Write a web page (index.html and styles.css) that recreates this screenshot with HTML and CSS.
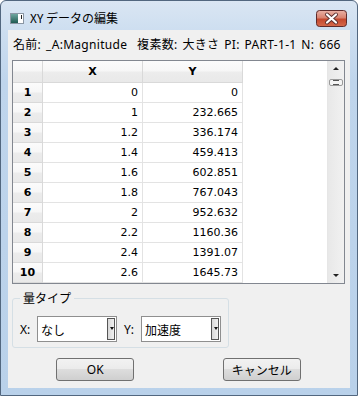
FILE: index.html
```html
<!DOCTYPE html>
<html lang="ja">
<head>
    <meta charset="UTF-8">
    <title>XY データの編集</title>
    <link rel="stylesheet" href="styles.css">
</head>
<body>
<div class="window">
    <div class="titlebar">
        <svg class="app-icon" width="14" height="11" viewBox="0 0 14 11">
            <defs>
                <linearGradient id="pic" x1="0" y1="0" x2="0" y2="1">
                    <stop offset="0" stop-color="#6fa7a0"/>
                    <stop offset="1" stop-color="#1f5a52"/>
                </linearGradient>
            </defs>
            <rect x="0.5" y="0.5" width="13" height="10" fill="#fff" stroke="#8a96a3"/>
            <rect x="1" y="1" width="7" height="9" fill="url(#pic)"/>
            <rect x="11" y="2" width="1" height="4" fill="#222"/>
        </svg>
        <span class="title">XY データの編集</span>
        <button class="close" aria-label="閉じる">
            <svg width="31" height="17" viewBox="0 0 31 17">
                <defs>
                    <linearGradient id="red" x1="0" y1="0" x2="0" y2="1">
                        <stop offset="0" stop-color="#e9b2a6"/>
                        <stop offset="0.45" stop-color="#d98370"/>
                        <stop offset="0.55" stop-color="#c4492f"/>
                        <stop offset="1" stop-color="#d66a4c"/>
                    </linearGradient>
                </defs>
                <rect x="0.5" y="0.5" width="30" height="16" rx="3" fill="url(#red)" stroke="#5e2b2b"/>
                <path d="M11 4.5 L20 12.5 M20 4.5 L11 12.5" stroke="#5a3030" stroke-width="4" stroke-linecap="round"/>
                <path d="M11 4.5 L20 12.5 M20 4.5 L11 12.5" stroke="#fff" stroke-width="2.2" stroke-linecap="round"/>
            </svg>
        </button>
    </div>

    <div class="client">
        <div class="info">名前: _A:Magnitude&nbsp; 複素数: 大きさ PI: PART-1-1 N: 666</div>

        <div class="table-box">
            <div class="grid">
                <table>
                    <thead>
                        <tr>
                            <th class="corner"></th>
                            <th class="colh">X</th>
                            <th class="colh">Y</th>
                            <th class="blank"></th>
                        </tr>
                    </thead>
                    <tbody id="rows"></tbody>
                </table>
            </div>
            <div class="scrollbar">
                <span class="arrow up"></span>
                <span class="thumb"><i></i></span>
                <span class="track"></span>
                <span class="arrow down"></span>
            </div>
        </div>

        <fieldset class="group">
            <legend>量タイプ</legend>
            <div class="combo-row">
                <label class="axis">X:</label>
                <div class="combo"><span class="value">なし</span><span class="drop"></span></div>
                <label class="axis y">Y:</label>
                <div class="combo"><span class="value">加速度</span><span class="drop"></span></div>
            </div>
        </fieldset>

        <div class="buttons">
            <button class="btn">OK</button>
            <button class="btn">キャンセル</button>
        </div>
    </div>
</div>

<script>
    var data = [
        ['0', '0'],
        ['1', '232.665'],
        ['1.2', '336.174'],
        ['1.4', '459.413'],
        ['1.6', '602.851'],
        ['1.8', '767.043'],
        ['2', '952.632'],
        ['2.2', '1160.36'],
        ['2.4', '1391.07'],
        ['2.6', '1645.73']
    ];
    var tbody = document.getElementById('rows');
    data.forEach(function (row, i) {
        var tr = document.createElement('tr');
        tr.innerHTML = '<th class="rowh">' + (i + 1) + '</th>' +
            '<td class="num">' + row[0] + '</td>' +
            '<td class="num">' + row[1] + '</td>' +
            '<td class="blank"></td>';
        tbody.appendChild(tr);
    });
</script>
</body>
</html>
```

FILE: styles.css
```css
body {
    margin: 0;
    font-family: "Noto Sans", "Noto Sans CJK JP", sans-serif;
    font-size: 12px;
    color: #000;
}

.window {
    width: 358px;
    height: 396px;
    box-sizing: border-box;
    border: 1px solid #52677f;
    border-radius: 6px 6px 0 0;
    background: linear-gradient(#dae6f3 0, #cddef0 30px, #bfd5ec 80px, #b9d1ea);
    padding: 0 7px 7px;
    display: flex;
    flex-direction: column;
}

/* title bar */
.titlebar {
    height: 29px;
    display: flex;
    align-items: flex-start;
    flex-shrink: 0;
}

.app-icon {
    margin: 12px 6px 0 2px;
}

.title {
    margin-top: 9px;
    line-height: 16px;
    font-family: "Noto Sans CJK JP", sans-serif;
}

.close {
    margin: 9px 3px 0 auto;
    padding: 0;
    border: none;
    background: none;
    width: 31px;
    height: 17px;
}

.close svg {
    display: block;
}

/* client area */
.client {
    flex: 1;
    background: #f0f0f0;
    padding: 0 5px 0 4px;
    display: flex;
    flex-direction: column;
}

.info {
    margin-top: 7px;
    padding-left: 1px;
    line-height: 16px;
    word-spacing: 1.5px;
    letter-spacing: 0.3px;
    white-space: nowrap;
}

.table-box {
    margin-top: 7px;
    height: 224px;
    box-sizing: border-box;
    border: 1px solid #828790;
    background: #fff;
    display: flex;
}

.grid {
    flex: 1;
    overflow: hidden;
}

table {
    border-collapse: separate;
    border-spacing: 0;
    table-layout: fixed;
    width: 314px;
    font-family: "DejaVu Sans", sans-serif;
    font-size: 11px;
}

th, td {
    padding: 0;
    box-sizing: border-box;
}

thead th {
    height: 22px;
}

tbody tr {
    height: 20px;
}

.corner,
.colh,
.rowh {
    background: linear-gradient(#fbfbfb 0, #f7f7f7 45%, #ececec 55%, #e9e9e9);
    border-right: 1px solid #d9d9d9;
    border-bottom: 1px solid #d9d9d9;
    font-weight: bold;
    text-align: center;
}

.corner,
.rowh {
    width: 30px;
}

.colh {
    width: 100px;
}

.num {
    text-align: right;
    padding-right: 4px;
    border-right: 1px solid #e3e3e3;
    border-bottom: 1px solid #e3e3e3;
}

.blank {
    background: #fff;
}

/* scrollbar */
.scrollbar {
    width: 17px;
    box-sizing: border-box;
    border-left: 1px solid #e6e6e6;
    background: linear-gradient(to right, #e8e8e8, #f1f1f1);
    display: flex;
    flex-direction: column;
    align-items: center;
}

.arrow {
    width: 0;
    height: 0;
    border-left: 3px solid transparent;
    border-right: 3px solid transparent;
}

.arrow.up {
    margin-top: 6px;
    border-bottom: 3px solid #222;
}

.arrow.down {
    margin-bottom: 6px;
    border-top: 3px solid #222;
}

.thumb {
    margin-top: 9px;
    width: 14px;
    height: 7px;
    box-sizing: border-box;
    border: 1px solid #9a9a9a;
    border-radius: 2px;
    background: #f4f4f4;
    display: flex;
    align-items: center;
    justify-content: center;
}

.thumb i {
    width: 6px;
    height: 3px;
    border-top: 1px solid #555;
    border-bottom: 1px solid #555;
}

.track {
    flex: 1;
}

/* quantity type group */
.group {
    margin: 7px 0 0;
    width: 215px;
    box-sizing: border-box;
    border: 1px solid #d5dfe5;
    border-radius: 3px;
    padding: 0 7px 5px;
}

.group legend {
    padding: 0 3px;
    line-height: 14px;
    font-family: "Noto Sans CJK JP", sans-serif;
}

.combo-row {
    margin-top: 11px;
    display: flex;
    align-items: center;
}

.axis {
    width: 17px;
}

.axis.y {
    margin-left: 7px;
}

.combo {
    width: 80px;
    height: 26px;
    box-sizing: border-box;
    border: 1px solid #8f8f8f;
    background: #fff;
    display: flex;
    align-items: center;
}

.combo .value {
    flex: 1;
    padding-left: 3px;
    font-family: "Noto Sans CJK JP", sans-serif;
}

.drop {
    width: 8px;
    height: 22px;
    margin-right: 1px;
    box-sizing: border-box;
    border: 1px solid #555;
    background: linear-gradient(to right, #d8d8d8, #f0f0f0);
    display: flex;
    align-items: center;
    justify-content: flex-end;
}

.drop::after {
    content: "";
    border-left: 2px solid transparent;
    border-right: 2px solid transparent;
    border-top: 3px solid #111;
    margin-bottom: 2px;
}

/* dialog buttons */
.buttons {
    margin-top: 10px;
    display: flex;
    justify-content: space-around;
}

.btn {
    width: 78px;
    height: 23px;
    border: 1px solid #707070;
    border-radius: 3px;
    background: linear-gradient(#f2f2f2 0, #ebebeb 50%, #dddddd 50%, #cfcfcf);
    font-family: "Noto Sans", "Noto Sans CJK JP", sans-serif;
    font-size: 12px;
    color: #000;
    padding: 0;
}
```
